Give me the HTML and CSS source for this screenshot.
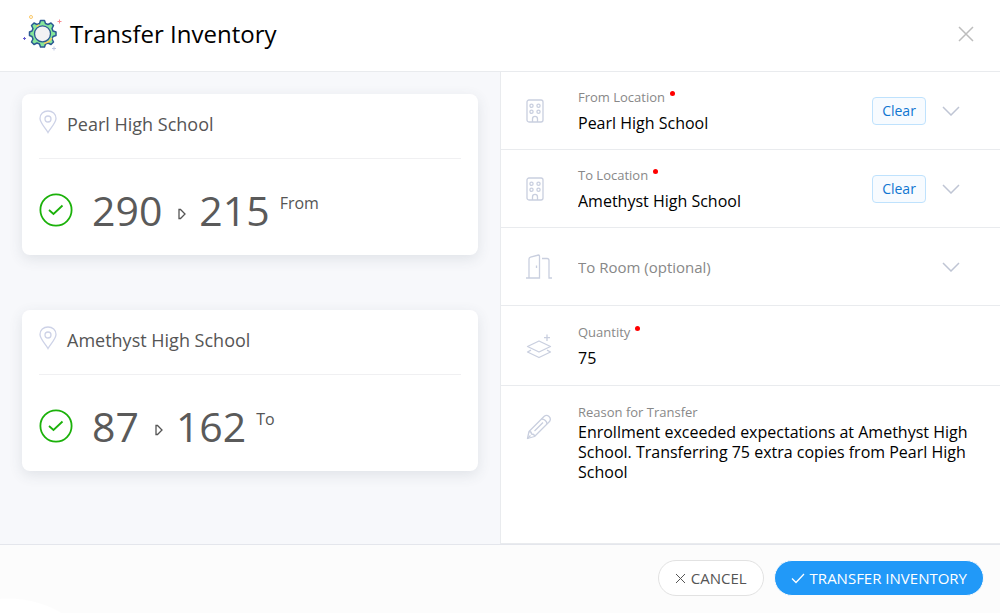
FILE: index.html
```
<!DOCTYPE html>
<html lang="en">
<head>
    <meta charset="UTF-8">
    <meta name="viewport" content="width=device-width, initial-scale=1.0">
    <title>Transfer Inventory</title>
    <link rel="stylesheet" href="styles.css">
</head>
<body>
    <header class="header">
        <svg class="logo" width="40" height="40" viewBox="0 0 40 40" fill="none">
            <path d="M18.500 6.500 H22.500 L23.500 9.500 L26 10.500 L29 9 L31.500 11.500 L30 14.500 L31 17 L34 18 V21.500 L31 22.500 L30 25 L31.500 28 L29 30.500 L26 29 L23.500 30 L22.500 33 H18.500 L17.500 30 L15 29 L12 30.500 L9.500 28 L11 25 L10 22.500 L7.500 21.500 V18 L10 17 L11 14.500 L9.500 11.500 L12 9 L15 10.500 L17.500 9.500 Z" fill="#86e79a" stroke="#2b5a92" stroke-width="1.500" stroke-linejoin="round"/>
            <path d="M30 24 L27 27.500 L22 29.500 M14.500 12.500 L17 11" stroke="#f3cf62" stroke-width="1.500"/>
            <circle cx="20.500" cy="19.800" r="8" fill="#f2f2f3" stroke="#2b5a92" stroke-width="1.300"/>
            <circle cx="9" cy="3" r="1.500" stroke="#fbc968"/>
            <path d="M37.500 5.500 v4 M35.500 7.500 h4" stroke="#f88b91"/>
            <path d="M2.500 23 v3 M1 24.500 h3" stroke="#655bd0"/>
            <path d="M32 32.500 v4 M30 34.500 h4" stroke="#bfc8e2"/>
        </svg>
        <h1>Transfer Inventory</h1>
        <button type="button" class="close" aria-label="Close">
            <svg width="16" height="16" viewBox="0 0 16 16" fill="none" stroke="#bdbdbd" stroke-width="1.500">
                <path d="M1 1 L15 15 M15 1 L1 15"/>
            </svg>
        </button>
    </header>

    <main class="content">
        <section class="summary">
            <div class="card">
                <div class="card-title">
                    <svg width="18" height="24" viewBox="0 0 18 24" fill="none" stroke="#cdd2e7" stroke-width="1.300">
                        <path d="M9 22.500 C7 18.500 1 13 1 8.500 C1 4 4.500 1 9 1 C13.500 1 17 4 17 8.500 C17 13 11 18.500 9 22.500 Z"/>
                        <circle cx="9" cy="9" r="3"/>
                    </svg>
                    <h2>Pearl High School</h2>
                </div>
                <div class="card-counts">
                    <svg class="check" width="34" height="34" viewBox="0 0 34 34" fill="none" stroke="#1bb10a" stroke-width="1.800">
                        <circle cx="17" cy="17" r="15.600"/>
                        <path d="M10 17 L14.500 21 L23.500 12.500"/>
                    </svg>
                    <span class="count">290</span>
                    <svg class="arrow" width="8" height="12" viewBox="0 0 8 12" fill="none" stroke="#555" stroke-width="1.300">
                        <path d="M1 1.500 L2.500 1.500 L7 6 L2.500 10.500 L1 10.500 Z"/>
                    </svg>
                    <span class="count">215</span>
                    <span class="direction">From</span>
                </div>
            </div>

            <div class="card">
                <div class="card-title">
                    <svg width="18" height="24" viewBox="0 0 18 24" fill="none" stroke="#cdd2e7" stroke-width="1.300">
                        <path d="M9 22.500 C7 18.500 1 13 1 8.500 C1 4 4.500 1 9 1 C13.500 1 17 4 17 8.500 C17 13 11 18.500 9 22.500 Z"/>
                        <circle cx="9" cy="9" r="3"/>
                    </svg>
                    <h2>Amethyst High School</h2>
                </div>
                <div class="card-counts">
                    <svg class="check" width="34" height="34" viewBox="0 0 34 34" fill="none" stroke="#1bb10a" stroke-width="1.800">
                        <circle cx="17" cy="17" r="15.600"/>
                        <path d="M10 17 L14.500 21 L23.500 12.500"/>
                    </svg>
                    <span class="count">87</span>
                    <svg class="arrow" width="8" height="12" viewBox="0 0 8 12" fill="none" stroke="#555" stroke-width="1.300">
                        <path d="M1 1.500 L2.500 1.500 L7 6 L2.500 10.500 L1 10.500 Z"/>
                    </svg>
                    <span class="count">162</span>
                    <span class="direction">To</span>
                </div>
            </div>
        </section>

        <form class="form" id="transferForm">
            <div class="row">
                <div class="row-icon">
                    <svg width="18" height="24" viewBox="0 0 18 24" fill="none" stroke="#c9cfdf" stroke-width="1.300">
                        <rect x="1" y="1" width="16" height="22" rx="2"/>
                        <circle cx="5.500" cy="6.800" r="1.600"/>
                        <circle cx="12.500" cy="6.800" r="1.600"/>
                        <circle cx="5.500" cy="12.800" r="1.600"/>
                        <circle cx="12.500" cy="12.800" r="1.600"/>
                        <path d="M6.500 23 V20 C6.500 16.600 11.500 16.600 11.500 20 V23"/>
                    </svg>
                </div>
                <div class="field">
                    <label class="required" for="fromLocation">From Location</label>
                    <select id="fromLocation">
                        <option>Pearl High School</option>
                    </select>
                </div>
                <button type="button" class="clear">Clear</button>
                <svg class="chevron" width="18" height="10" viewBox="0 0 18 10" fill="none" stroke="#bfc5d4" stroke-width="1.500">
                    <path d="M1 1 L9 9 L17 1"/>
                </svg>
            </div>

            <div class="row">
                <div class="row-icon">
                    <svg width="18" height="24" viewBox="0 0 18 24" fill="none" stroke="#c9cfdf" stroke-width="1.300">
                        <rect x="1" y="1" width="16" height="22" rx="2"/>
                        <circle cx="5.500" cy="6.800" r="1.600"/>
                        <circle cx="12.500" cy="6.800" r="1.600"/>
                        <circle cx="5.500" cy="12.800" r="1.600"/>
                        <circle cx="12.500" cy="12.800" r="1.600"/>
                        <path d="M6.500 23 V20 C6.500 16.600 11.500 16.600 11.500 20 V23"/>
                    </svg>
                </div>
                <div class="field">
                    <label class="required" for="toLocation">To Location</label>
                    <select id="toLocation">
                        <option>Amethyst High School</option>
                    </select>
                </div>
                <button type="button" class="clear">Clear</button>
                <svg class="chevron" width="18" height="10" viewBox="0 0 18 10" fill="none" stroke="#bfc5d4" stroke-width="1.500">
                    <path d="M1 1 L9 9 L17 1"/>
                </svg>
            </div>

            <div class="row">
                <div class="row-icon">
                    <svg width="26" height="26" viewBox="0 0 26 26" fill="none" stroke="#c9cfdf" stroke-width="1.300">
                        <path d="M0 24 H13.500 V2 C13.500 1.300 13 1 12.500 1 L4.500 3.200 C3.700 3.500 3 4 3 5 V24 M16 4.500 H21 C22.500 4.500 23 5 23 6.500 V24 H26"/>
                        <path d="M10.500 11.500 V14"/>
                    </svg>
                </div>
                <div class="field">
                    <select id="toRoom" class="empty" aria-label="To Room (optional)">
                        <option value="">To Room (optional)</option>
                    </select>
                </div>
                <svg class="chevron" width="18" height="10" viewBox="0 0 18 10" fill="none" stroke="#bfc5d4" stroke-width="1.500">
                    <path d="M1 1 L9 9 L17 1"/>
                </svg>
            </div>

            <div class="row row-quantity">
                <div class="row-icon">
                    <svg width="26" height="26" viewBox="0 0 26 26" fill="none" stroke="#c9cfdf" stroke-width="1.300" stroke-linejoin="round">
                        <path d="M1.500 13.500 L13 8 L24.500 13.500 L13 19 Z"/>
                        <path d="M5 17.200 L1.500 19 L13 24.500 L24.500 19 L21 17.200"/>
                        <path d="M21 1.500 V8 M18 4.700 H24"/>
                    </svg>
                </div>
                <div class="field">
                    <label class="required" for="quantity">Quantity</label>
                    <input type="text" inputmode="numeric" id="quantity" value="75">
                </div>
            </div>

            <div class="row row-reason">
                <div class="row-icon">
                    <svg width="26" height="26" viewBox="0 0 26 26" fill="none" stroke="#c9cfdf" stroke-width="1.300" stroke-linejoin="round">
                        <path d="M1.500 24.500 L3 17.500 L18 2.500 C21.500 -0.500 26 4 23.500 7.500 L8.500 22.500 Z"/>
                        <path d="M3 17.500 C5.500 17.500 5.500 19.500 5.500 20 C7.500 20 8.500 21 8.500 22.500 M15.500 5 C18.500 5 21 7.500 21 10 M8.500 17 L17 8.500 M1.500 24.500 L4.500 21.500"/>
                    </svg>
                </div>
                <div class="field">
                    <label for="reason">Reason for Transfer</label>
                    <textarea id="reason" rows="5">Enrollment exceeded expectations at Amethyst High School. Transferring 75 extra copies from Pearl High School</textarea>
                </div>
            </div>
        </form>
    </main>

    <footer class="footer">
        <button type="button" class="btn btn-cancel">
            <svg width="11" height="11" viewBox="0 0 11 11" fill="none" stroke="currentColor">
                <path d="M1 1 L10 10 M10 1 L1 10"/>
            </svg>
            CANCEL
        </button>
        <button type="submit" form="transferForm" class="btn btn-primary">
            <svg width="14" height="11" viewBox="0 0 14 11" fill="none" stroke="currentColor" stroke-width="1.300">
                <path d="M1 5.500 L5 9.500 L13 1"/>
            </svg>
            TRANSFER INVENTORY
        </button>
    </footer>
</body>
</html>
```

FILE: styles.css
```
* {
    box-sizing: border-box;
}
body {
    display: flex;
    flex-direction: column;
    min-height: 100vh;
    margin: 0;
    font-family: "Open Sans", sans-serif;
    color: #555;
    background-color: #fff;
}
h1, h2 {
    margin: 0;
    font-weight: 400;
}
button, input, select, textarea {
    font-family: inherit;
}
button, select {
    cursor: pointer;
}

/* Header */
.header {
    display: flex;
    align-items: center;
    padding: 13px 26px 16px 22px;
    border-bottom: 1px solid #e9ebee;
}
.logo {
    margin-right: 8px;
}
.header h1 {
    font-size: 24px;
    line-height: 42px;
    color: #000;
}
.close {
    display: flex;
    margin-left: auto;
    padding: 0;
    border: none;
    background: none;
}

/* Content */
.content {
    display: grid;
    grid-template-columns: 1fr 1fr;
    flex: 1;
}
.summary {
    display: flex;
    flex-direction: column;
    gap: 55px;
    padding: 22px;
    background-color: #f7f8fb;
}
.card {
    padding: 0 17px;
    border-radius: 8px;
    background-color: #fff;
    box-shadow: 0 4px 14px rgba(60, 70, 90, 0.12);
}
.card-title {
    display: flex;
    align-items: center;
    gap: 10px;
    height: 65px;
    padding-bottom: 8px;
    border-bottom: 1px solid #f0f0f2;
}
.card-title h2 {
    font-size: 18px;
    line-height: 24px;
    padding-top: 4px;
}
.card-counts {
    display: flex;
    align-items: center;
    height: 96px;
    padding-top: 5px;
}
.check {
    flex: none;
    margin-right: 19px;
}
.count {
    font-size: 41px;
    line-height: 56px;
    color: #5a5a5a;
}
.arrow {
    margin: 8px 13px 0 16px;
}
.direction {
    margin: 0 0 14px 10px;
    font-size: 16px;
    line-height: 24px;
}

/* Form */
.form {
    display: flex;
    flex-direction: column;
    border-left: 1px solid #e9ebee;
}
.row {
    display: flex;
    align-items: center;
    min-height: 78px;
    padding: 8px 22px 8px 25px;
    border-bottom: 1px solid #e9ebee;
}
.row-icon {
    flex: none;
    display: flex;
    width: 52px;
}
.field {
    flex: 1;
    display: flex;
    flex-direction: column;
    align-items: flex-start;
    gap: 4px;
}
label {
    font-size: 13px;
    line-height: 20px;
    color: #888;
}
.required::after {
    content: "";
    display: inline-block;
    width: 5px;
    height: 5px;
    margin-left: 5px;
    border-radius: 50%;
    background-color: #f00;
    vertical-align: 6px;
}
.field input,
.field select,
.field textarea {
    width: 100%;
    padding: 0;
    border: none;
    background: none;
    color: #000;
    font-size: 16px;
    line-height: 24px;
    appearance: none;
}
.field .empty {
    color: #888;
    font-size: 15px;
}
.field textarea {
    line-height: 20px;
    resize: none;
}
.clear {
    width: 54px;
    height: 28px;
    padding: 0;
    border: 1px solid #bfe2fd;
    border-radius: 4px;
    background-color: #f7fbff;
    color: #0f76d1;
    font-size: 14px;
}
.chevron {
    margin: 0 18px 0 16px;
    pointer-events: none;
}
.row-quantity {
    min-height: 80px;
}
.row-reason {
    flex: 1;
    align-items: flex-start;
    padding-top: 16px;
    padding-right: 16px;
}
.row-reason .row-icon {
    padding-top: 12px;
}
.row-reason .field {
    gap: 0;
}

/* Footer */
.footer {
    display: flex;
    justify-content: flex-end;
    gap: 10px;
    padding: 15px 16px 17px;
    border-top: 1px solid #e4e6ec;
    background:
        radial-gradient(circle at 8px 160px, #fff 106px, transparent 107px),
        #fcfcfc;
}
.btn {
    display: flex;
    align-items: center;
    gap: 5px;
    height: 36px;
    padding: 0 16px;
    border: 1px solid #e2e2e2;
    border-radius: 18px;
    font-size: 15px;
}
.btn-cancel {
    background-color: #fff;
    color: #555;
}
.btn-primary {
    border-color: #fcfcfc;
    background-color: #2199f8;
    color: #fff;
}
```
